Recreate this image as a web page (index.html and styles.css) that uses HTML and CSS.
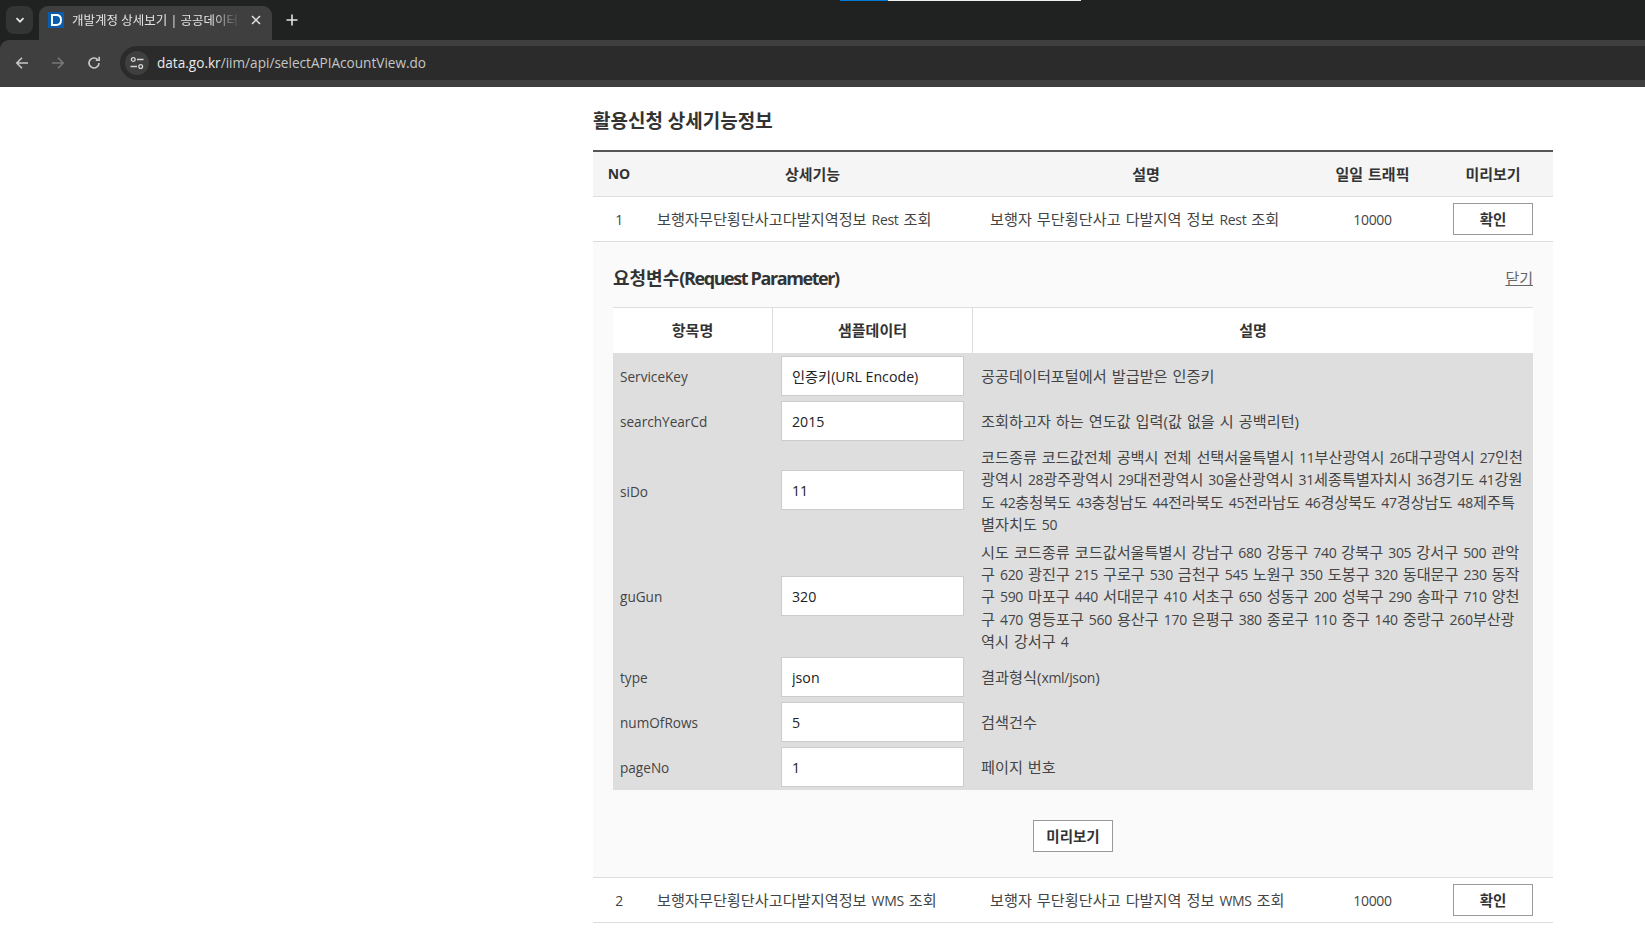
FILE: index.html
```html
<!DOCTYPE html>
<html lang="ko">
<head>
<meta charset="utf-8">
<title>개발계정 상세보기 | 공공데이터포털</title>
<link rel="stylesheet" href="styles.css">
</head>
<body>
<header class="chrome">
  <div class="progress"><span class="progress-blue"></span><span class="progress-white"></span></div>
  <div class="tabstrip">
    <div class="tab-search"><svg width="12" height="12" viewBox="0 0 12 12"><path d="M2.5 4.2 6 7.7l3.5-3.5" fill="none" stroke="#e3e3e3" stroke-width="1.8"/></svg></div>
    <div class="tab">
      <svg class="favicon" width="16" height="16" viewBox="0 0 16 16"><rect width="16" height="16" fill="#0b5cab"/><path d="M4 3h4.2c3 0 4.8 2 4.8 5s-1.8 5-4.8 5H4z" fill="none" stroke="#fff" stroke-width="1.9"/></svg>
      <span class="tab-title">개발계정 상세보기 | 공공데이터포털</span>
      <svg class="tab-close" width="10" height="10" viewBox="0 0 10 10"><path d="M1 1l8 8M9 1L1 9" stroke="#e3e3e3" stroke-width="1.5"/></svg>
    </div>
    <svg class="newtab" width="12" height="12" viewBox="0 0 12 12"><path d="M6 .5v11M.5 6h11" stroke="#e3e3e3" stroke-width="1.6"/></svg>
  </div>
  <div class="toolbar">
    <svg class="nav" width="16" height="16" viewBox="0 0 16 16"><path d="M14 8H3M8 2.8 2.8 8 8 13.200" fill="none" stroke="#c7c7c7" stroke-width="1.6"/></svg>
    <svg class="nav" width="16" height="16" viewBox="0 0 16 16"><path d="M2 8h11M8 2.800 13.200 8 8 13.200" fill="none" stroke="#777" stroke-width="1.6"/></svg>
    <svg class="nav" width="16" height="16" viewBox="0 0 16 16"><path d="M13 8a5 5 0 1 1-1.500-3.600M13.200 1.800v3.400H9.800" fill="none" stroke="#c7c7c7" stroke-width="1.6"/></svg>
    <div class="omnibox">
      <span class="site-info"><svg width="16" height="16" viewBox="0 0 16 16"><g fill="none" stroke="#d5d5d5" stroke-width="1.300"><circle cx="4.300" cy="4.500" r="1.900"/><path d="M8 4.500h6.500M1.500 11.500H8"/><circle cx="11.700" cy="11.500" r="1.900"/></g></svg></span>
      <span class="url"><span class="url-host">data.go.kr</span>/iim/api/selectAPIAcountView.do</span>
    </div>
  </div>
</header>

<main class="page">
  <h2 class="page-title">활용신청 상세기능정보</h2>
  <table class="list">
    <colgroup><col class="c-no"><col class="c-name"><col class="c-desc"><col class="c-traffic"><col class="c-view"></colgroup>
    <thead>
      <tr><th class="th-no">NO</th><th>상세기능</th><th>설명</th><th>일일 트래픽</th><th>미리보기</th></tr>
    </thead>
    <tbody>
      <tr>
        <td class="center"><span class="la">1</span></td>
        <td class="name">보행자무단횡단사고다발지역정보 <span class="la">Rest</span> 조회</td>
        <td>보행자 무단횡단사고 다발지역 정보 <span class="la">Rest</span> 조회</td>
        <td class="center"><span class="la">10000</span></td>
        <td class="center"><button class="btn" type="button">확인</button></td>
      </tr>
      <tr class="detail-row">
        <td colspan="5" class="detail">
          <div class="detail-head">
            <h3 class="detail-title">요청변수<span class="detail-title-la">(Request Parameter)</span></h3>
            <a class="detail-close" href="#">닫기</a>
          </div>
          <table class="params">
            <colgroup><col class="p-name"><col class="p-sample"><col class="p-desc"></colgroup>
            <thead>
              <tr><th>항목명</th><th>샘플데이터</th><th>설명</th></tr>
            </thead>
            <tbody>
              <tr><td class="key">ServiceKey</td><td class="val"><input class="field" value="인증키(URL Encode)"></td><td>공공데이터포털에서 발급받은 인증키</td></tr>
              <tr><td class="key">searchYearCd</td><td class="val"><input class="field" value="2015"></td><td>조회하고자 하는 연도값 입력(값 없을 시 공백리턴)</td></tr>
              <tr><td class="key">siDo</td><td class="val"><input class="field" value="11"></td><td>코드종류 코드값전체 공백시 전체 선택서울특별시 <span class="la">11</span>부산광역시 <span class="la">26</span>대구광역시 <span class="la">27</span>인천<br>광역시 <span class="la">28</span>광주광역시 <span class="la">29</span>대전광역시 <span class="la">30</span>울산광역시 <span class="la">31</span>세종특별자치시 <span class="la">36</span>경기도 <span class="la">41</span>강원<br>도 <span class="la">42</span>충청북도 <span class="la">43</span>충청남도 <span class="la">44</span>전라북도 <span class="la">45</span>전라남도 <span class="la">46</span>경상북도 <span class="la">47</span>경상남도 <span class="la">48</span>제주특<br>별자치도 <span class="la">50</span></td></tr>
              <tr><td class="key">guGun</td><td class="val"><input class="field" value="320"></td><td>시도 코드종류 코드값서울특별시 강남구 <span class="la">680</span> 강동구 <span class="la">740</span> 강북구 <span class="la">305</span> 강서구 <span class="la">500</span> 관악<br>구 <span class="la">620</span> 광진구 <span class="la">215</span> 구로구 <span class="la">530</span> 금천구 <span class="la">545</span> 노원구 <span class="la">350</span> 도봉구 <span class="la">320</span> 동대문구 <span class="la">230</span> 동작<br>구 <span class="la">590</span> 마포구 <span class="la">440</span> 서대문구 <span class="la">410</span> 서초구 <span class="la">650</span> 성동구 <span class="la">200</span> 성북구 <span class="la">290</span> 송파구 <span class="la">710</span> 양천<br>구 <span class="la">470</span> 영등포구 <span class="la">560</span> 용산구 <span class="la">170</span> 은평구 <span class="la">380</span> 종로구 <span class="la">110</span> 중구 <span class="la">140</span> 중랑구 <span class="la">260</span>부산광<br>역시 강서구 <span class="la">4</span></td></tr>
              <tr><td class="key">type</td><td class="val"><input class="field" value="json"></td><td>결과형식(<span class="la">xml/json</span>)</td></tr>
              <tr><td class="key">numOfRows</td><td class="val"><input class="field" value="5"></td><td>검색건수</td></tr>
              <tr><td class="key">pageNo</td><td class="val"><input class="field" value="1"></td><td>페이지 번호</td></tr>
            </tbody>
          </table>
          <div class="preview-wrap"><button class="btn" type="button">미리보기</button></div>
        </td>
      </tr>
      <tr>
        <td class="center"><span class="la">2</span></td>
        <td class="name">보행자무단횡단사고다발지역정보 <span class="la">WMS</span> 조회</td>
        <td>보행자 무단횡단사고 다발지역 정보 <span class="la">WMS</span> 조회</td>
        <td class="center"><span class="la">10000</span></td>
        <td class="center"><button class="btn" type="button">확인</button></td>
      </tr>
    </tbody>
  </table>
</main>
</body>
</html>
```

FILE: styles.css
```css
* { box-sizing: border-box; }
html, body { margin: 0; height: 100%; overflow: hidden; background: #fff; }
body {
  font-family: "Open Sans", "Noto Sans CJK KR", sans-serif;
  font-size: 15.2px;
  line-height: 22.4px;
  word-spacing: 1px;
  color: #444;
}

/* browser chrome */
.chrome { position: relative; height: 87px; background: #202221; word-spacing: 0; }
.progress { position: absolute; top: 0; left: 840px; display: flex; height: 1px; }
.progress-blue { width: 48px; background: #0078d4; }
.progress-white { width: 193px; background: #eee; }
.tabstrip { display: flex; align-items: flex-start; height: 40px; padding: 6px 0 0 6px; }
.tab-search {
  display: flex; align-items: center; justify-content: center;
  width: 27px; height: 28px; border-radius: 8px; background: #333534;
}
.tab {
  display: flex; align-items: center; height: 34px; width: 233px;
  margin-left: 6px; padding: 0 11px 6px 9px;
  background: #3f3f3f; border-radius: 9px 9px 0 0;
}
.favicon { flex: none; }
.tab-title {
  flex: 1; min-width: 0; margin: 1px 10px 0 8px; overflow: hidden; white-space: nowrap;
  font-size: 12.500px; line-height: 16px; color: #e3e3e3;
  -webkit-mask-image: linear-gradient(90deg, #000 82%, transparent);
  mask-image: linear-gradient(90deg, #000 82%, transparent);
}
.tab-close { flex: none; }
.newtab { margin: 8px 0 0 14px; }
.toolbar {
  display: flex; align-items: center; height: 47px; padding: 0 0 1px 14px;
  background: #3f3f3f; border-radius: 9px 0 0 0;
}
.nav { flex: none; margin-right: 20px; }
.omnibox {
  flex: 1; display: flex; align-items: center; height: 34px;
  padding-left: 5px; margin-left: -2px; background: #2b2b2b; border-radius: 17px 0 0 17px;
}
.site-info {
  display: flex; align-items: center; justify-content: center;
  width: 24px; height: 24px; border-radius: 50%; background: #3f3f3f;
}
.url { margin-left: 8px; font-size: 13.600px; line-height: 20px; color: #c4c7c5; }
.url-host { color: #e8eaed; }

/* page */
.page { width: 960px; margin-left: 593px; }
.page-title {
  margin: 0; padding-top: 21px; height: 63px;
  font-size: 19px; line-height: 26px; font-weight: 700; color: #333; word-spacing: 0;
}
.list, .params { width: 100%; border-collapse: separate; border-spacing: 0; table-layout: fixed; }
.list { border-top: 2px solid #555; }
.c-no { width: 52px; }
.c-name { width: 335px; }
.c-desc { width: 332px; }
.c-traffic { width: 121px; }
.c-view { width: 120px; }
.list > thead th {
  height: 45px; padding: 1px 0 0; background: #f5f5f5; border-bottom: 1px solid #ddd;
  font-size: 15px; font-weight: 700; color: #333;
}
.list > thead th.th-no { font-size: 14px; }
.list > tbody > tr > td { height: 45px; padding: 1px 10px 0; border-bottom: 1px solid #ddd; white-space: nowrap; }
.list > tbody > tr > td.name { padding-left: 12px; }
.list > tbody > tr > td.center { padding: 1px 0 0; text-align: center; }
.list > tbody > tr > td.detail { height: auto; padding: 0 20px; background: #fafafa; }
.list > tbody > tr > td.center:last-child { padding: 0; }
.la { font-size: 14px; letter-spacing: -.3px; line-height: 1; }
.btn {
  display: inline-block; width: 80px; height: 32px; padding: 2px 0 0; vertical-align: middle;
  background: #fff; border: 1px solid #999; border-radius: 0;
  font: 700 14.500px/22px "Open Sans", "Noto Sans CJK KR", sans-serif; color: #333;
}
.detail-head { display: flex; align-items: center; justify-content: space-between; height: 65px; padding-top: 6px; }
.detail-title { margin: 0; font-size: 18px; line-height: 26px; font-weight: 700; color: #333; word-spacing: 0; }
.detail-title-la { letter-spacing: -1.4px; }
.detail-close { padding-top: 2px; font-size: 15px; color: #666; }

.p-name { width: 159px; }
.p-sample { width: 200px; }
.params { border-top: 1px solid #ddd; }
.params thead th {
  height: 45px; padding: 0; background: #fff; border-left: 1px solid #ddd;
  font-size: 15px; font-weight: 700; color: #333;
}
.params thead th:first-child { border-left: 0; }
.params tbody td { padding: 3px 0 2px 9px; background: #dedede; white-space: nowrap; }
.params tbody td.val { padding-top: 2.500px; padding-bottom: 2.500px; }
.params tbody td.key { padding: 4px 0 1px 7px; font-size: 13.600px; }
.field {
  display: block; width: 183px; height: 40px; padding: 1px 10px 0;
  background: #fff; border: 1px solid #ccc; border-radius: 0; outline: 0;
  font: 14.200px "Open Sans", "Noto Sans CJK KR", sans-serif; color: #222;
}
.preview-wrap { display: flex; justify-content: center; padding: 30px 0 25px; }
```
